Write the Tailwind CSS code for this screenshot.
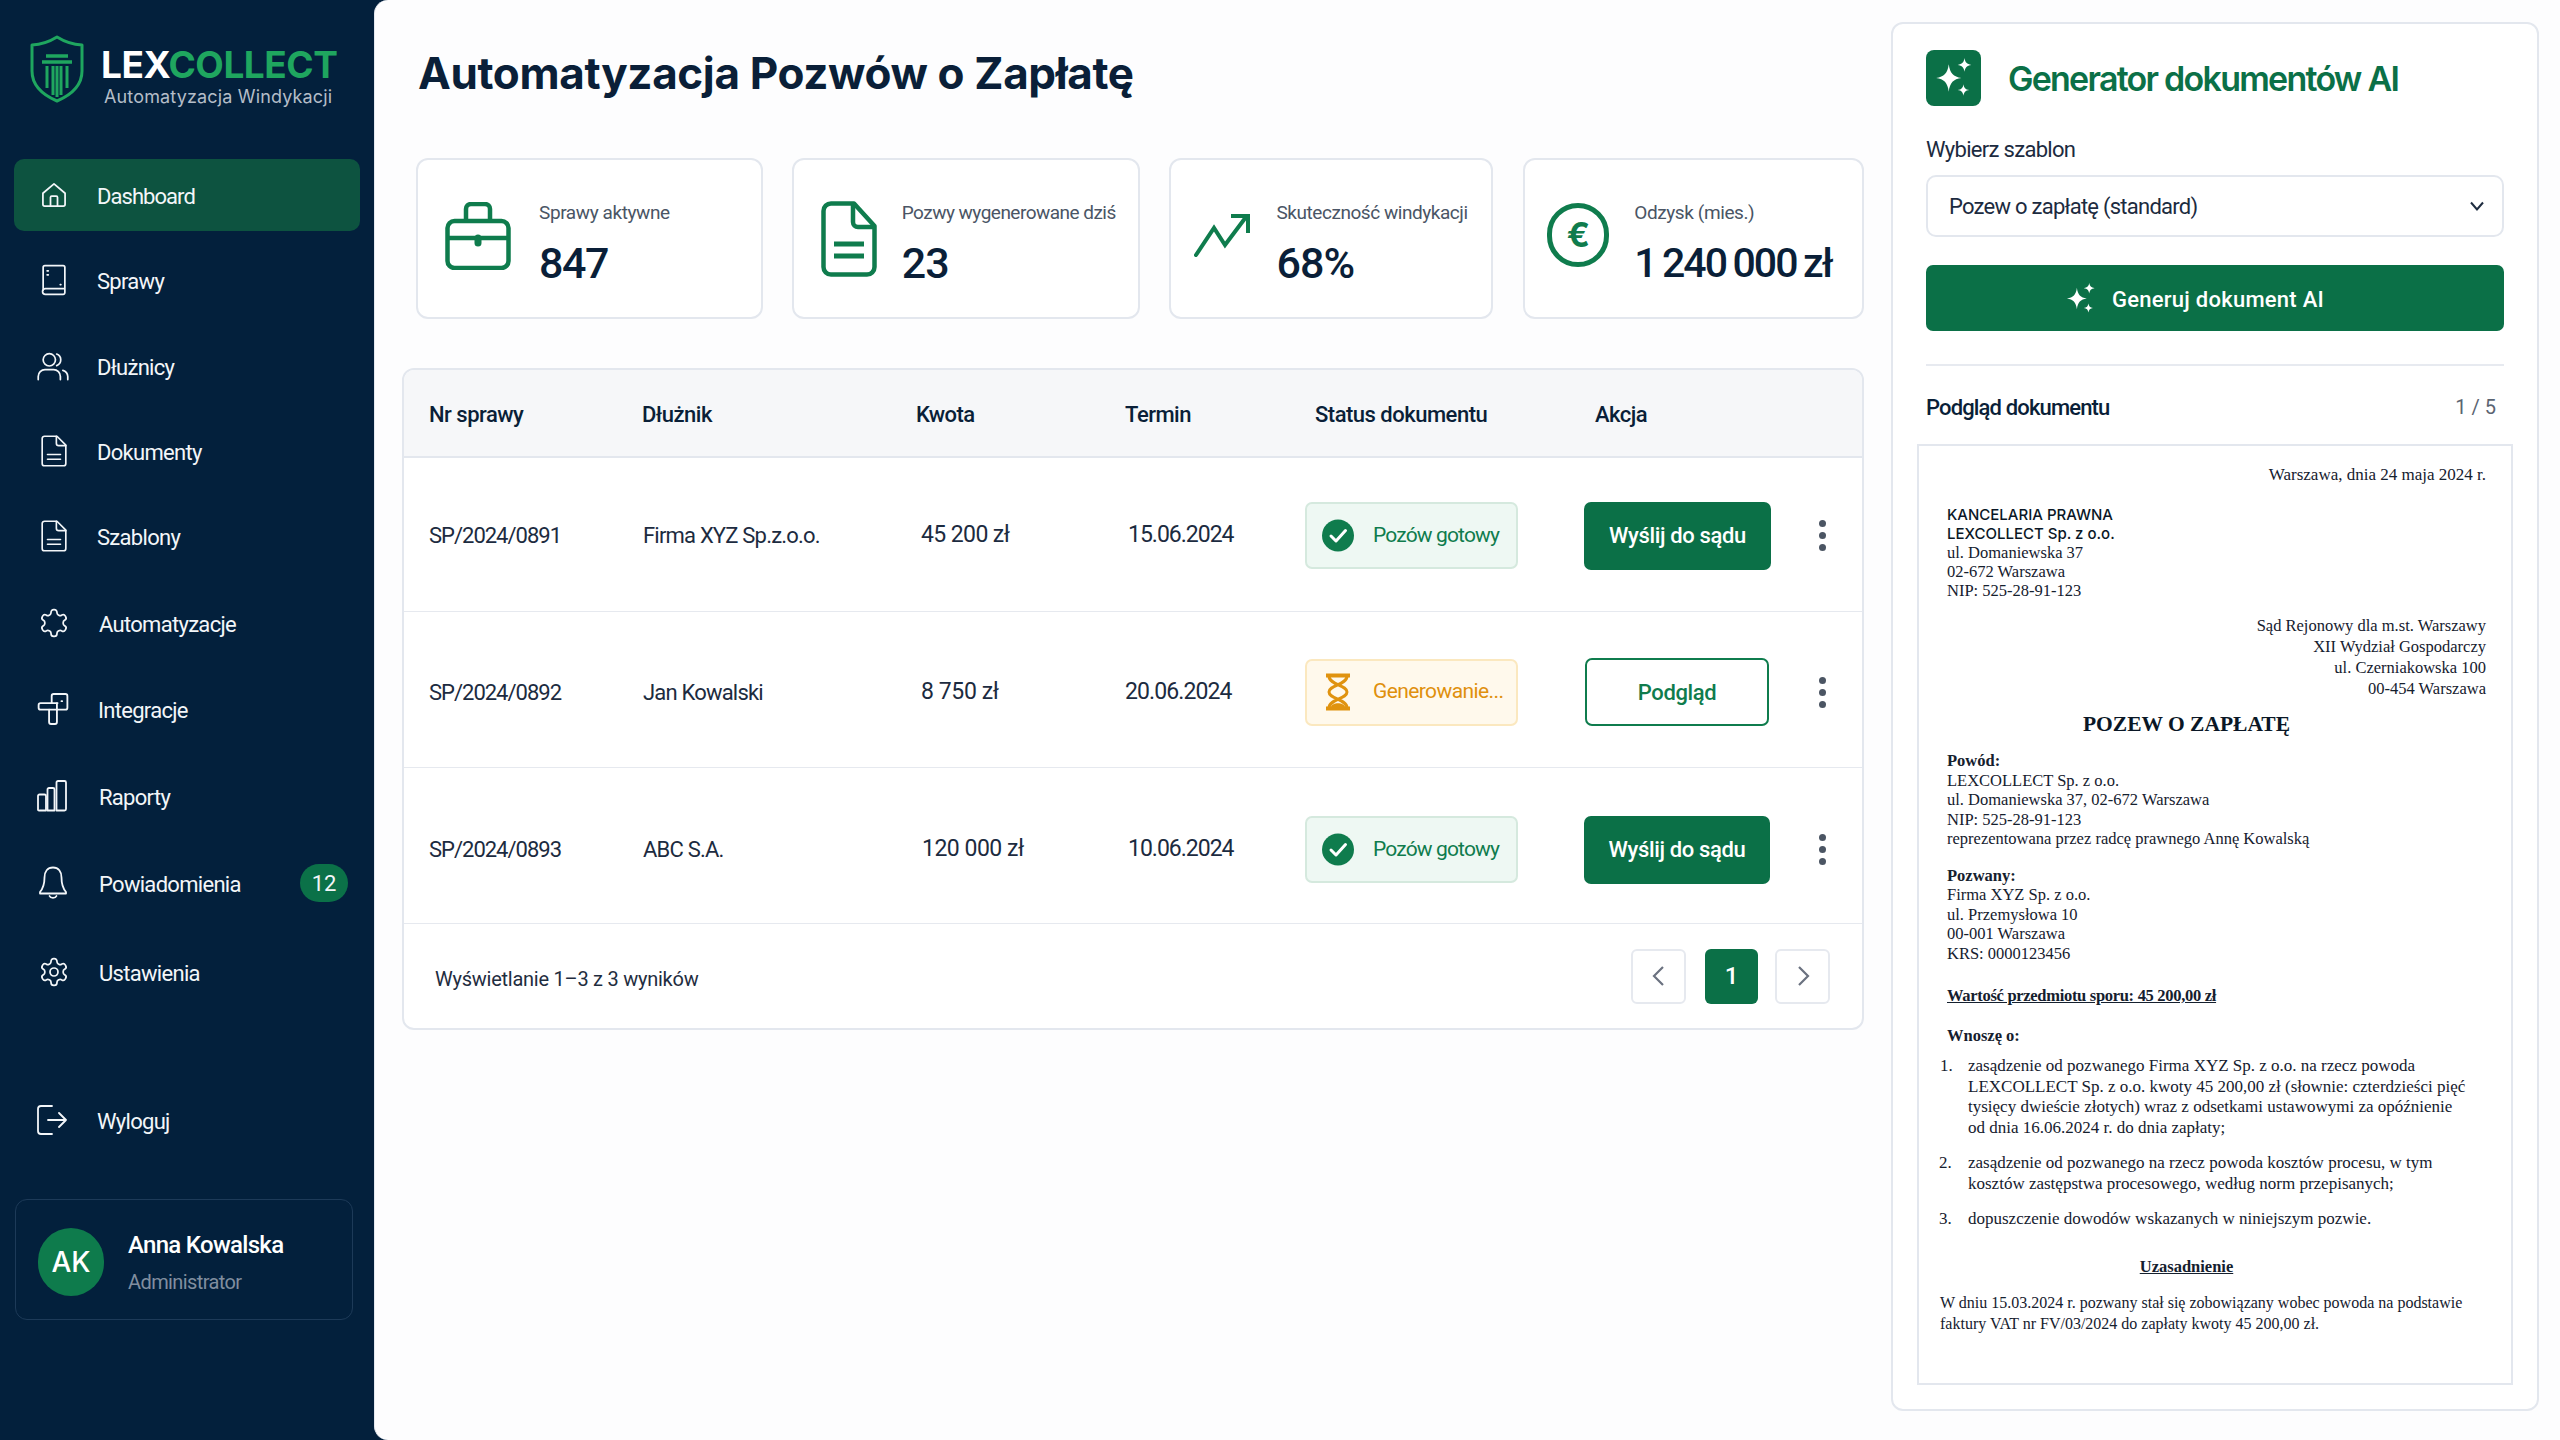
<!DOCTYPE html>
<html lang="pl">
<head>
<meta charset="utf-8">
<title>LexCollect</title>
<script src="https://cdn.jsdelivr.net/npm/@tailwindcss/browser@4"></script>
</head>
<body class="m-0">
<div class="flex w-[2560px] h-[1440px] overflow-hidden bg-[#03203c] font-[family-name:Inter] text-[#0b1f38]">

<aside class="w-[374px] shrink-0 flex flex-col text-[#f3f6f9]">
  <div class="flex h-[159px] pl-[30px] pt-[35px]">
    <svg class="w-[54px] h-[68px] shrink-0" viewBox="0 0 54 68" fill="none" stroke="#1fa65f" stroke-width="3" stroke-linejoin="round">
      <path d="M27 2 C35 7 43 9.500 52 10 V36 C52 50 41 60 27 66 C13 60 2 50 2 36 V10 C11 9.500 19 7 27 2Z"/>
      <path d="M16 21H38" stroke-width="3.500"/><path d="M12 27H42" stroke-width="3.500"/>
      <path d="M17 31V53M23 31V60M27 31V62M31 31V60M37 31V53" stroke-width="3"/>
    </svg>
    <div class="ml-[17px]">
      <div class="text-[37px] leading-[40px] font-bold tracking-[-0.45px] mt-[10px]"><span class="text-white">LEX</span><span class="text-[#1fa65f]">COLLECT</span></div>
      <div class="text-[18px] leading-[24px] text-[#b4bdc8] tracking-[0.15px] ml-[3px]">Automatyzacja Windykacji</div>
    </div>
  </div>

  <nav class="flex flex-col text-[22px] tracking-[-0.7px] px-[14px] font-[family-name:Roboto]">
    <a class="h-[72px] w-[346px] flex items-center rounded-[10px] bg-[#0d5340] pl-[26px]">
      <svg class="w-[28px] h-[28px] mr-[29px] shrink-0" viewBox="0 0 24 24" fill="none" stroke="currentColor" stroke-width="1.500" stroke-linejoin="round"><path d="M2.500 10.500 12 2.500l9.500 8V20a1.500 1.500 0 0 1-1.500 1.500H4A1.500 1.500 0 0 1 2.500 20z"/><path d="M9 21.500V14a1 1 0 0 1 1-1h4a1 1 0 0 1 1 1v7.500"/></svg>
      <span class="pt-[3px] tracking-[-0.95px]">Dashboard</span></a>

    <a class="h-[72px] mt-[13px] flex items-center pl-[26px]">
      <svg class="w-[28px] h-[32px] mr-[29px] shrink-0" viewBox="0 0 24 28" fill="none" stroke="currentColor" stroke-width="1.500" stroke-linejoin="round" stroke-linecap="round"><path d="M2.500 23V3A1.500 1.500 0 0 1 4 1.500h16A1.500 1.500 0 0 1 21.500 3v18.500H4.500a2.500 2.500 0 0 0 0 5H20a1.500 1.500 0 0 0 1.500-1.500v-3.500"/><path d="M6 6h1M6 9.500h1M17.500 18h.5"/></svg>
      <span class="pt-[3px]">Sprawy</span></a>

    <a class="h-[72px] mt-[14px] flex items-center pl-[23px]">
      <svg class="w-[32px] h-[30px] mr-[28px] shrink-0" viewBox="0 0 26 24" fill="none" stroke="currentColor" stroke-width="1.400" stroke-linecap="round"><circle cx="10" cy="7" r="5"/><path d="M1 23v-2.500a5.500 5.500 0 0 1 5.500-5.500h7a5.500 5.500 0 0 1 5.500 5.500V23"/><path d="M16 2.300a5 5 0 0 1 0 9.400"/><path d="M21 15.500a5.500 5.500 0 0 1 4 5V23"/></svg>
      <span class="pt-[3px]">Dłużnicy</span></a>

    <a class="h-[72px] mt-[13px] flex items-center pl-[27px]">
      <svg class="w-[26px] h-[32px] mr-[30px] shrink-0" viewBox="0 0 22 27" fill="none" stroke="currentColor" stroke-width="1.400" stroke-linejoin="round" stroke-linecap="round"><path d="M13.500 1H3a2 2 0 0 0-2 2v21a2 2 0 0 0 2 2h16a2 2 0 0 0 2-2V8.500z"/><path d="M13 1v6a2 2 0 0 0 2 2h6"/><path d="M5.500 16.500h11M5.500 20.500h11"/></svg>
      <span class="pt-[3px]">Dokumenty</span></a>

    <a class="h-[72px] mt-[13px] flex items-center pl-[27px]">
      <svg class="w-[26px] h-[32px] mr-[30px] shrink-0" viewBox="0 0 22 27" fill="none" stroke="currentColor" stroke-width="1.400" stroke-linejoin="round" stroke-linecap="round"><path d="M13.500 1H3a2 2 0 0 0-2 2v21a2 2 0 0 0 2 2h16a2 2 0 0 0 2-2V8.500z"/><path d="M13 1v6a2 2 0 0 0 2 2h6"/><path d="M5.500 16.500h11M5.500 20.500h11"/></svg>
      <span class="pt-[3px]">Szablony</span></a>

    <a class="h-[72px] mt-[15px] flex items-center pl-[24px]">
      <svg class="w-[32px] h-[32px] mr-[29px] shrink-0" viewBox="0 0 24 24" fill="none" stroke="currentColor" stroke-width="1.300" stroke-linejoin="round"><path d="M12.220 2h-.44a2 2 0 0 0-2 2v.18a2 2 0 0 1-1 1.730l-.43.25a2 2 0 0 1-2 0l-.15-.08a2 2 0 0 0-2.730.73l-.22.38a2 2 0 0 0 .73 2.730l.15.1a2 2 0 0 1 1 1.720v.51a2 2 0 0 1-1 1.740l-.15.09a2 2 0 0 0-.73 2.730l.22.38a2 2 0 0 0 2.730.73l.15-.08a2 2 0 0 1 2 0l.43.25a2 2 0 0 1 1 1.730V20a2 2 0 0 0 2 2h.44a2 2 0 0 0 2-2v-.18a2 2 0 0 1 1-1.730l.43-.25a2 2 0 0 1 2 0l.15.08a2 2 0 0 0 2.730-.73l.22-.39a2 2 0 0 0-.73-2.730l-.15-.08a2 2 0 0 1-1-1.740v-.5a2 2 0 0 1 1-1.740l.15-.09a2 2 0 0 0 .73-2.730l-.22-.38a2 2 0 0 0-2.730-.73l-.15.08a2 2 0 0 1-2 0l-.43-.25a2 2 0 0 1-1-1.730V4a2 2 0 0 0-2-2z"/></svg>
      <span class="pt-[3px]">Automatyzacje</span></a>

    <a class="h-[72px] mt-[14px] flex items-center pl-[23px]">
      <svg class="w-[32px] h-[34px] mr-[29px] shrink-0" viewBox="0 0 24 26" fill="none" stroke="currentColor" stroke-width="1.400" stroke-linejoin="round" stroke-linecap="round"><path d="M11 8.500V3a1.500 1.500 0 0 1 1.500-1.500h9A1.500 1.500 0 0 1 23 3v9a1.500 1.500 0 0 1-1.500 1.500H15"/><path d="M15.500 8.500H2.500A1.500 1.500 0 0 0 1 10v2a1.500 1.500 0 0 0 1.500 1.500H15"/><path d="M9 13.500V23a1.500 1.500 0 0 0 1.500 1.500h3A1.500 1.500 0 0 0 15 23V8.500"/><path d="M18.500 7h.5"/></svg>
      <span class="pt-[3px]">Integracje</span></a>

    <a class="h-[72px] mt-[15px] flex items-center pl-[23px]">
      <svg class="w-[30px] h-[32px] mr-[32px] shrink-0" viewBox="0 0 30 32" fill="none" stroke="currentColor" stroke-width="1.800" stroke-linejoin="round"><path d="M1 30V16a1.500 1.500 0 0 1 1.500-1.500h5A1.500 1.500 0 0 1 9 16v14.500H2.500A1.500 1.500 0 0 1 1 30z"/><path d="M10.500 30.500V9.500a1.500 1.500 0 0 1 1.500-1.500h4a1.500 1.500 0 0 1 1.500 1.500v21z"/><path d="M19.500 30.500V2.500A1.500 1.500 0 0 1 21 1h6.500A1.500 1.500 0 0 1 29 2.500V29a1.500 1.500 0 0 1-1.500 1.500z"/></svg>
      <span class="pt-[3px]">Raporty</span></a>

    <a class="h-[72px] mt-[15px] flex items-center pl-[25px]">
      <svg class="w-[28px] h-[34px] mr-[32px] shrink-0" viewBox="0 0 28 34" fill="none" stroke="currentColor" stroke-width="1.800" stroke-linejoin="round" stroke-linecap="round"><path d="M14 1.500c-5.500 0-8.500 4-8.500 10 0 8-1.500 11-4.500 14.500v1.500h26V26c-3-3.500-4.500-6.500-4.500-14.500 0-6-3-10-8.500-10z"/><path d="M10.500 30c1 2.500 6 2.500 7 0"/></svg>
      <span class="pt-[3px]">Powiadomienia</span>
      <span class="ml-auto mr-[12px] w-[48px] h-[38px] rounded-full bg-[#0b7148] flex items-center justify-center tracking-normal">12</span></a>

    <a class="h-[72px] mt-[17px] flex items-center pl-[24px]">
      <svg class="w-[32px] h-[34px] mr-[29px] shrink-0" viewBox="0 0 24 24" fill="none" stroke="currentColor" stroke-width="1.300" stroke-linejoin="round"><path d="M12.220 2h-.44a2 2 0 0 0-2 2v.18a2 2 0 0 1-1 1.730l-.43.25a2 2 0 0 1-2 0l-.15-.08a2 2 0 0 0-2.730.73l-.22.38a2 2 0 0 0 .73 2.730l.15.1a2 2 0 0 1 1 1.720v.51a2 2 0 0 1-1 1.740l-.15.09a2 2 0 0 0-.73 2.730l.22.38a2 2 0 0 0 2.730.73l.15-.08a2 2 0 0 1 2 0l.43.25a2 2 0 0 1 1 1.730V20a2 2 0 0 0 2 2h.44a2 2 0 0 0 2-2v-.18a2 2 0 0 1 1-1.730l.43-.25a2 2 0 0 1 2 0l.15.08a2 2 0 0 0 2.730-.73l.22-.39a2 2 0 0 0-.73-2.730l-.15-.08a2 2 0 0 1-1-1.740v-.5a2 2 0 0 1 1-1.740l.15-.09a2 2 0 0 0 .73-2.730l-.22-.38a2 2 0 0 0-2.730-.73l-.15.08a2 2 0 0 1-2 0l-.43-.25a2 2 0 0 1-1-1.730V4a2 2 0 0 0-2-2z"/><circle cx="12" cy="12" r="3"/></svg>
      <span class="pt-[3px]">Ustawienia</span></a>

    <a class="h-[72px] mt-[76px] flex items-center pl-[23px]">
      <svg class="w-[30px] h-[30px] mr-[30px] shrink-0" viewBox="0 0 30 30" fill="none" stroke="currentColor" stroke-width="1.800" stroke-linejoin="round" stroke-linecap="round"><path d="M15 1H4a3 3 0 0 0-3 3v22a3 3 0 0 0 3 3h11"/><path d="M11 15h18M22 8l7 7-7 7"/></svg>
      <span class="pt-[3px]">Wyloguj</span></a>
  </nav>

  <div class="mt-[43px] ml-[15px] w-[338px] h-[121px] rounded-[12px] border border-[#1d3a58] flex items-center pl-[22px] pt-[5px]">
    <div class="w-[66px] h-[68px] rounded-full bg-[#0e7b4c] flex items-center justify-center text-[28px] font-medium text-white shrink-0">AK</div>
    <div class="ml-[24px] font-[family-name:Roboto]">
      <div class="text-[24px] leading-[32px] font-medium tracking-[-0.7px] text-white">Anna Kowalska</div>
      <div class="text-[20px] leading-[26px] mt-[8px] tracking-[-0.6px] text-[#808e9f]">Administrator</div>
    </div>
  </div>
</aside>

<main class="flex-1 flex items-start rounded-l-[14px] bg-[#fdfdfe] border-l border-[#e4e8ef]">
  <div class="w-[1462px] ml-[27px] shrink-0">
    <h1 class="mt-[43px] h-[60px] ml-[16px] flex items-center text-[44px] font-bold tracking-[-0.36px] text-[#0a1f38]">Automatyzacja Pozwów o Zapłatę</h1>

    <div class="mt-[55px] ml-[14px] flex h-[161px] font-[family-name:Roboto]">
      <div class="w-[347px] rounded-[12px] border-2 border-[#e3e7ee] bg-white flex items-center pl-[27px]">
        <svg class="w-[66px] h-[68px] -mt-[6px] shrink-0" viewBox="0 0 66 68" fill="none" stroke="#0f7c4d" stroke-width="4.500" stroke-linejoin="round"><path d="M21 19V7a5 5 0 0 1 5-5h14a5 5 0 0 1 5 5v12"/><rect x="2.500" y="19" width="61" height="47" rx="7"/><path d="M2.500 36h61"/><path d="M33 36v5" stroke-width="7" stroke-linecap="round"/></svg>
        <div class="ml-[28px] pt-[12px]">
          <div class="text-[19px] leading-[26px] tracking-[-0.4px] text-[#4a5565]">Sprawy aktywne</div>
          <div class="text-[43px] leading-[52px] font-medium tracking-[-1.500px] mt-[11px] text-[#0a1f38]">847</div>
        </div>
      </div>
      <div class="w-[348px] ml-[29px] rounded-[12px] border-2 border-[#e3e7ee] bg-white flex items-center pl-[27px]">
        <svg class="w-[56px] h-[76px] shrink-0" viewBox="0 0 56 76" fill="none" stroke="#0f7c4d" stroke-width="4.500" stroke-linejoin="round"><path d="M33 2.500H10a7.500 7.500 0 0 0-7.500 7.500v56a7.500 7.500 0 0 0 7.500 7.500h36a7.500 7.500 0 0 0 7.500-7.500V25z"/><path d="M32 3v18a5 5 0 0 0 5 5h16.500"/><path d="M13 43h30M13 55h30" stroke-width="5"/></svg>
        <div class="ml-[25px] pt-[12px]">
          <div class="text-[19px] leading-[26px] tracking-[-0.52px] text-[#4a5565] whitespace-nowrap">Pozwy wygenerowane dziś</div>
          <div class="text-[43px] leading-[52px] font-medium tracking-[-1px] mt-[11px] text-[#0a1f38]">23</div>
        </div>
      </div>
      <div class="w-[325px] ml-[29px] rounded-[12px] border-2 border-[#e3e7ee] bg-white flex items-center pl-[23px]">
        <svg class="w-[56px] h-[44px] -mt-[8px] shrink-0" viewBox="0 0 56 44" fill="none" stroke="#0f7c4d" stroke-width="4" stroke-linecap="round"><path d="M2 42 L20 15 L31 32 L52 4"/><path d="M39 3H54V18" stroke-linecap="square"/></svg>
        <div class="ml-[27px] pt-[12px]">
          <div class="text-[19px] leading-[26px] tracking-[-0.45px] text-[#4a5565] whitespace-nowrap">Skuteczność windykacji</div>
          <div class="text-[43px] leading-[52px] font-medium tracking-[-1px] mt-[11px] text-[#0a1f38]">68%</div>
        </div>
      </div>
      <div class="w-[341px] ml-[30px] rounded-[12px] border-2 border-[#e3e7ee] bg-white flex items-center pl-[22px]">
        <div class="w-[62px] h-[64px] -mt-[8px] shrink-0 rounded-full border-[5px] border-[#0f7c4d] flex items-center justify-center text-[#0f7c4d] text-[34px] font-bold font-[family-name:Inter]">€</div>
        <div class="ml-[25px] pt-[12px]">
          <div class="text-[19px] leading-[26px] tracking-[-0.4px] text-[#4a5565]">Odzysk (mies.)</div>
          <div class="text-[41px] leading-[52px] font-medium tracking-[-1.900px] [word-spacing:-2px] mt-[11px] whitespace-nowrap text-[#0a1f38]">1 240 000 zł</div>
        </div>
      </div>
    </div>

    <div class="mt-[49px] rounded-[12px] border-2 border-[#e3e7ee] bg-white overflow-hidden font-[family-name:Roboto] text-[22px]">
      <div class="grid grid-cols-[213px_274px_209px_190px_280px_auto] h-[88px] pt-[3px] items-center bg-[#f6f7f9] border-b-2 border-[#e3e7ee] pl-[25px] font-medium tracking-[-0.5px] text-[#0a1f38]">
        <div>Nr sprawy</div><div>Dłużnik</div><div>Kwota</div><div>Termin</div><div>Status dokumentu</div><div>Akcja</div>
      </div>

      <div class="grid grid-cols-[213px_274px_209px_180px_279px_238px_auto] h-[154px] pt-[2px] items-center border-b border-[#e6e9ef] pl-[25px] text-[#1c2b40]">
        <div class="tracking-[-1px]">SP/2024/0891</div><div class="ml-[1px] tracking-[-0.8px]">Firma XYZ Sp.z.o.o.</div><div class="ml-[5px] text-[23px] tracking-[-0.6px]">45 200 zł</div><div class="ml-[3px] text-[23px] tracking-[-1px]">15.06.2024</div>
        <div class="w-[213px] h-[67px] rounded-[7px] border-2 border-[#d5e9de] bg-[#eef8f3] flex items-center pl-[15px]">
          <svg class="w-[32px] h-[33px] shrink-0" viewBox="0 0 32 32"><circle cx="16" cy="16" r="16" fill="#0f7c4d"/><path d="M9 16.500l5 5L23.500 11" fill="none" stroke="#fff" stroke-width="3" stroke-linecap="round" stroke-linejoin="round"/></svg>
          <span class="ml-[19px] text-[#0f7c4d] text-[21px] tracking-[-0.85px]">Pozów gotowy</span>
        </div>
        <div class="w-[187px] h-[68px] rounded-[7px] bg-[#0b7047] text-white font-medium tracking-[-0.35px] flex items-center justify-center">Wyślij do sądu</div>
        <div class="flex flex-col gap-[5px] items-center w-[0px]"><i class="w-[7px] h-[7px] rounded-full bg-[#4b5563]"></i><i class="w-[7px] h-[7px] rounded-full bg-[#4b5563]"></i><i class="w-[7px] h-[7px] rounded-full bg-[#4b5563]"></i></div>
      </div>

      <div class="grid grid-cols-[213px_274px_209px_180px_279px_238px_auto] h-[156px] pt-[5px] items-center border-b border-[#e6e9ef] pl-[25px] text-[#1c2b40]">
        <div class="tracking-[-1px]">SP/2024/0892</div><div class="ml-[1px] tracking-[-0.8px]">Jan Kowalski</div><div class="ml-[5px] text-[23px] tracking-[-0.4px]">8 750 zł</div><div class="text-[23px] tracking-[-0.9px]">20.06.2024</div>
        <div class="w-[213px] h-[67px] rounded-[7px] border-2 border-[#fbe8bf] bg-[#fff9ec] flex items-center pl-[18px]">
          <svg class="w-[26px] h-[38px] shrink-0" viewBox="0 0 26 38" fill="none" stroke="#e0930f" stroke-width="3"><path d="M1 2.500h24M1 35.500h24" stroke-width="4"/><path d="M4 3c0 9 18 9 18 16S4 26 4 35M22 3c0 9-18 9-18 16s18 7 18 16"/><path d="M6 34c1-5 13-5 14 0z" fill="#e0930f" stroke="none"/></svg>
          <span class="ml-[22px] text-[#e0900c] text-[21px] tracking-[-0.6px] whitespace-nowrap">Generowanie...</span>
        </div>
        <div class="w-[184px] h-[68px] ml-[1px] rounded-[7px] border-2 border-[#0f7c4d] bg-white text-[#0f7c4d] font-medium tracking-[-0.4px] flex items-center justify-center">Podgląd</div>
        <div class="flex flex-col gap-[5px] items-center w-[0px]"><i class="w-[7px] h-[7px] rounded-full bg-[#4b5563]"></i><i class="w-[7px] h-[7px] rounded-full bg-[#4b5563]"></i><i class="w-[7px] h-[7px] rounded-full bg-[#4b5563]"></i></div>
      </div>

      <div class="grid grid-cols-[213px_274px_209px_180px_279px_238px_auto] h-[156px] pt-[8px] items-center border-b border-[#e6e9ef] pl-[25px] text-[#1c2b40]">
        <div class="tracking-[-1px]">SP/2024/0893</div><div class="ml-[1px] tracking-[-0.8px]">ABC S.A.</div><div class="ml-[6px] text-[23px] tracking-[-0.5px]">120 000 zł</div><div class="ml-[3px] text-[23px] tracking-[-1px]">10.06.2024</div>
        <div class="w-[213px] h-[67px] rounded-[7px] border-2 border-[#d5e9de] bg-[#eef8f3] flex items-center pl-[15px]">
          <svg class="w-[32px] h-[33px] shrink-0" viewBox="0 0 32 32"><circle cx="16" cy="16" r="16" fill="#0f7c4d"/><path d="M9 16.500l5 5L23.500 11" fill="none" stroke="#fff" stroke-width="3" stroke-linecap="round" stroke-linejoin="round"/></svg>
          <span class="ml-[19px] text-[#0f7c4d] text-[21px] tracking-[-0.85px]">Pozów gotowy</span>
        </div>
        <div class="w-[186px] h-[68px] rounded-[7px] bg-[#0b7047] text-white font-medium tracking-[-0.35px] flex items-center justify-center">Wyślij do sądu</div>
        <div class="flex flex-col gap-[5px] items-center w-[0px]"><i class="w-[7px] h-[7px] rounded-full bg-[#4b5563]"></i><i class="w-[7px] h-[7px] rounded-full bg-[#4b5563]"></i><i class="w-[7px] h-[7px] rounded-full bg-[#4b5563]"></i></div>
      </div>

      <div class="h-[104px] flex items-center pl-[31px] text-[20px] text-[#1f2d40]">
        <span class="pt-[5px] tracking-[-0.25px]">Wyświetlanie 1–3 z 3 wyników</span>
        <div class="ml-auto mr-[32px] flex items-center">
          <div class="w-[55px] h-[55px] rounded-[6px] border-2 border-[#e6e9ef] bg-white flex items-center justify-center"><svg class="w-[16px] h-[24px]" viewBox="0 0 16 24" fill="none" stroke="#6b7280" stroke-width="2.200"><path d="M12 3 3 12l9 9"/></svg></div>
          <div class="w-[53px] h-[55px] ml-[19px] rounded-[6px] bg-[#0b7047] text-white flex items-center justify-center text-[24px] font-medium">1</div>
          <div class="w-[55px] h-[55px] ml-[17px] rounded-[6px] border-2 border-[#e6e9ef] bg-white flex items-center justify-center"><svg class="w-[16px] h-[24px]" viewBox="0 0 16 24" fill="none" stroke="#6b7280" stroke-width="2.200"><path d="M4 3l9 9-9 9"/></svg></div>
        </div>
      </div>
    </div>
  </div>

  <section class="ml-[27px] mt-[22px] w-[648px] h-[1389px] rounded-[12px] border-2 border-[#e3e7ee] bg-white px-[33px] pt-[26px] font-[family-name:Roboto] shrink-0">
    <div class="flex items-center h-[56px]">
      <div class="w-[55px] h-[56px] rounded-[8px] bg-[#0b7047] flex items-center justify-center">
        <svg class="w-[38px] h-[42px]" viewBox="0 0 36 40" fill="#fff"><path d="M13 7c1 8.500 4.500 12 12 13-7.500 1-11 4.500-12 13-1-8.500-4.500-12-12-13 7.500-1 11-4.500 12-13z"/><path d="M28 1c.6 4.200 2.300 5.800 6.500 6.500-4.200.7-5.900 2.300-6.500 6.500-.6-4.200-2.300-5.800-6.500-6.500 4.200-.7 5.900-2.300 6.500-6.500z"/><path d="M27 26c.5 3.500 2 5 5.500 5.500-3.500.5-5 2-5.500 5.500-.5-3.500-2-5-5.500-5.500 3.500-.5 5-2 5.500-5.500z"/></svg>
      </div>
      <h2 class="ml-[27px] text-[34px] font-semibold text-[#0b7047] font-[family-name:Inter] tracking-[-1.75px] whitespace-nowrap">Generator dokumentów AI</h2>
    </div>
    <div class="mt-[29px] text-[22px] leading-[30px] tracking-[-0.7px] text-[#1c2b40]">Wybierz szablon</div>
    <div class="mt-[10px] h-[62px] rounded-[10px] border-2 border-[#e3e7ee] bg-white flex items-center pl-[21px] pr-[17px] text-[22px] text-[#1c2b40]">
      <span class="pt-[1px] tracking-[-0.75px]">Pozew o zapłatę (standard)</span>
      <svg class="ml-auto w-[16px] h-[12px]" viewBox="0 0 16 12" fill="none" stroke="#1f2d40" stroke-width="2"><path d="M2 2.500l6 7 6-7"/></svg>
    </div>
    <div class="mt-[28px] h-[66px] rounded-[7px] bg-[#0b7047] text-white text-[22px] font-medium flex items-center justify-center tracking-[0.25px] pr-[40px]">
      <svg class="w-[30px] h-[33px] mr-[16px]" viewBox="0 0 36 40" fill="#fff"><path d="M13 7c1 8.500 4.500 12 12 13-7.500 1-11 4.500-12 13-1-8.500-4.500-12-12-13 7.500-1 11-4.500 12-13z"/><path d="M28 1c.6 4.200 2.300 5.800 6.500 6.500-4.200.7-5.900 2.300-6.500 6.500-.6-4.200-2.300-5.800-6.500-6.500 4.200-.7 5.900-2.300 6.500-6.500z"/><path d="M27 26c.5 3.500 2 5 5.500 5.500-3.500.5-5 2-5.500 5.500-.5-3.500-2-5-5.500-5.500 3.500-.5 5-2 5.500-5.500z"/></svg>
      <span class="pt-[2px]">Generuj dokument AI</span>
    </div>
    <div class="mt-[33px] border-t-2 border-[#e7eaf0]"></div>
    <div class="mt-[26px] flex items-center justify-between h-[30px] text-[22px]">
      <span class="font-medium tracking-[-0.85px] text-[#0a1f38]">Podgląd dokumentu</span>
      <span class="text-[#5b6472] text-[20px] mr-[8px]">1 / 5</span>
    </div>

    <div class="mt-[22px] -mx-[9px] h-[941px] border-2 border-[#e3e7ee] bg-white font-[family-name:'Liberation_Serif'] text-[16.500px] text-[#15202e]">
      <div class="pt-[19px] pr-[25px] text-right text-[17px] leading-[20px]">Warszawa, dnia 24 maja 2024 r.</div>
      <div class="mt-[20px] pl-[28px] leading-[19px]"><div class="font-[family-name:Inter] font-medium text-[15px] text-[#0a1726]">KANCELARIA PRAWNA<br>LEXCOLLECT Sp. z o.o.</div>ul. Domaniewska 37<br>02-672 Warszawa<br>NIP: 525-28-91-123</div>
      <div class="mt-[15px] pr-[25px] text-right text-[16.500px] leading-[21px]">Sąd Rejonowy dla m.st. Warszawy<br>XII Wydział Gospodarczy<br>ul. Czerniakowska 100<br>00-454 Warszawa</div>
      <div class="mt-[10px] w-[535px] text-center text-[21.500px] leading-[30px] font-bold text-[#0a1726]">POZEW O ZAPŁATĘ</div>
      <div class="mt-[12px] pl-[28px] leading-[19.500px]"><b>Powód:</b><br>LEXCOLLECT Sp. z o.o.<br>ul. Domaniewska 37, 02-672 Warszawa<br>NIP: 525-28-91-123<br>reprezentowana przez radcę prawnego Annę Kowalską</div>
      <div class="mt-[17px] pl-[28px] leading-[19.500px]"><b>Pozwany:</b><br>Firma XYZ Sp. z o.o.<br>ul. Przemysłowa 10<br>00-001 Warszawa<br>KRS: 0000123456</div>
      <div class="mt-[23px] pl-[28px] leading-[20px] font-bold tracking-[-0.3px]"><u>Wartość przedmiotu sporu: 45 200,00 zł</u></div>
      <div class="mt-[20px] pl-[28px] leading-[20px] font-bold">Wnoszę o:</div>
      <div class="mt-[10px] pl-[21px] leading-[20.700px] flex text-[17px]"><span class="w-[28px] shrink-0">1.</span><span>zasądzenie od pozwanego Firma XYZ Sp. z o.o. na rzecz powoda<br>LEXCOLLECT Sp. z o.o. kwoty 45 200,00 zł (słownie: czterdzieści pięć<br>tysięcy dwieście złotych) wraz z odsetkami ustawowymi za opóźnienie<br>od dnia 16.06.2024 r. do dnia zapłaty;</span></div>
      <div class="mt-[14px] pl-[20px] leading-[20.700px] flex text-[17px]"><span class="w-[29px] shrink-0">2.</span><span>zasądzenie od pozwanego na rzecz powoda kosztów procesu, w tym<br>kosztów zastępstwa procesowego, według norm przepisanych;</span></div>
      <div class="mt-[15px] pl-[20px] leading-[20.700px] flex text-[17px]"><span class="w-[29px] shrink-0">3.</span><span>dopuszczenie dowodów wskazanych w niniejszym pozwie.</span></div>
      <div class="mt-[27px] w-[535px] text-center leading-[20px] font-bold"><u>Uzasadnienie</u></div>
      <div class="mt-[15px] pl-[21px] leading-[21px] text-[16px]">W dniu 15.03.2024 r. pozwany stał się zobowiązany wobec powoda na podstawie<br>faktury VAT nr FV/03/2024 do zapłaty kwoty 45 200,00 zł.</div>
    </div>
  </section>
</main>
</div>
</body>
</html>
